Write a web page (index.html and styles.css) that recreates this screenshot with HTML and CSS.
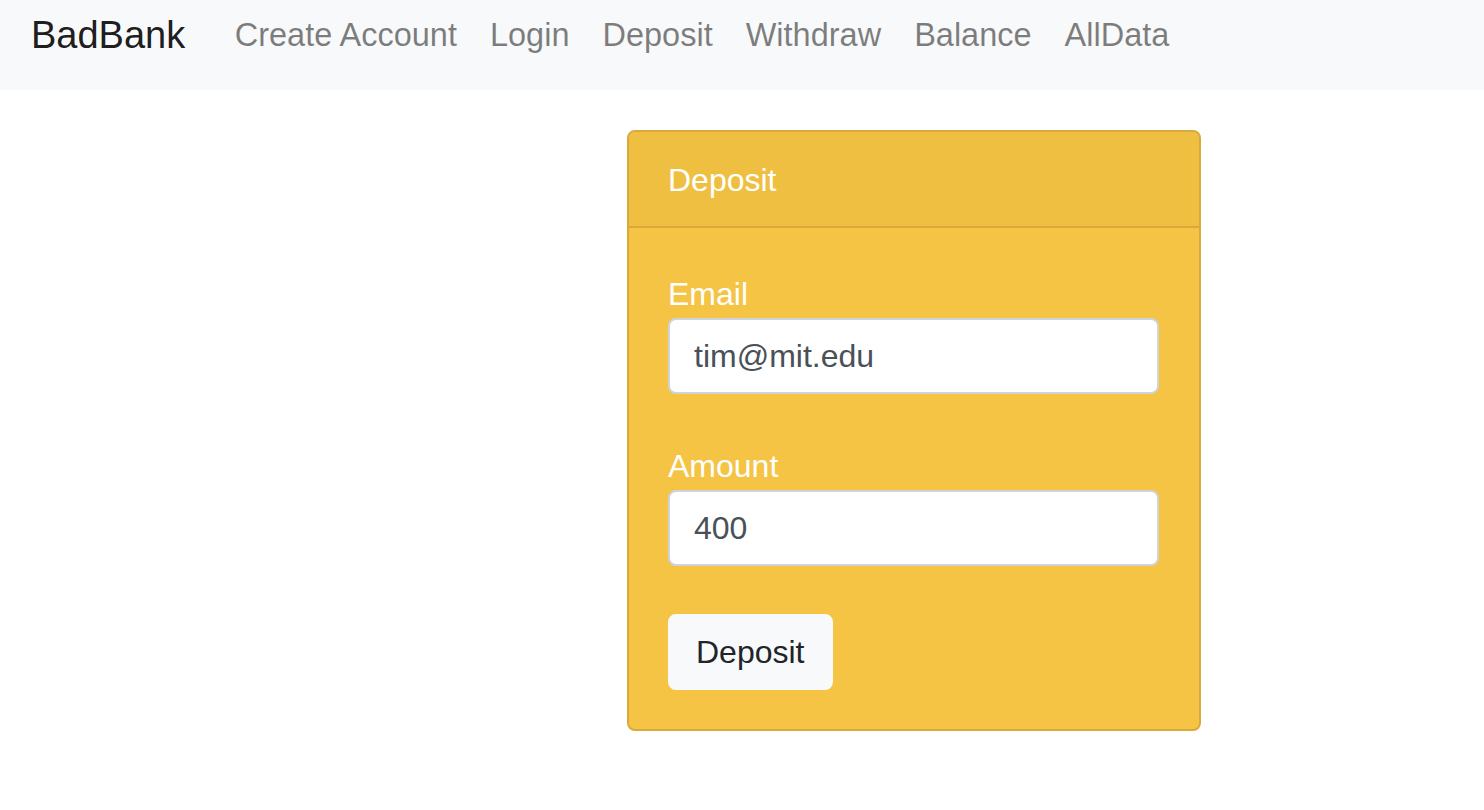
FILE: index.html
```html
<!DOCTYPE html>
<html lang="en">
<head>
<meta charset="utf-8">
<title>BadBank</title>
<link rel="stylesheet" href="styles.css">
</head>
<body>
<nav class="navbar">
  <a class="brand" href="#">BadBank</a>
  <ul class="nav">
    <li><a class="nav-link" href="#">Create Account</a></li>
    <li><a class="nav-link" href="#">Login</a></li>
    <li><a class="nav-link" href="#">Deposit</a></li>
    <li><a class="nav-link" href="#">Withdraw</a></li>
    <li><a class="nav-link" href="#">Balance</a></li>
    <li><a class="nav-link" href="#">AllData</a></li>
  </ul>
</nav>
<main class="page">
  <section class="card">
    <header class="card-header">Deposit</header>
    <div class="card-body">
      <label class="label" for="email">Email</label>
      <input class="input" id="email" type="text" value="tim@mit.edu">
      <label class="label gap" for="amount">Amount</label>
      <input class="input" id="amount" type="text" value="400">
      <button class="btn gap" type="button">Deposit</button>
    </div>
  </section>
</main>
</body>
</html>
```

FILE: styles.css
```css
* { box-sizing: border-box; }
html, body { margin: 0; padding: 0; }
body {
  font-family: "Liberation Sans", Arial, Helvetica, sans-serif;
  background: #ffffff;
  color: #212529;
}
.navbar {
  display: flex;
  align-items: flex-start;
  height: 90px;
  padding: 11px 31px 0;
  background: #f8f9fa;
}
.brand {
  font-size: 38px;
  line-height: 48px;
  color: rgba(0, 0, 0, 0.9);
  text-decoration: none;
  margin-right: 33px;
}
.nav {
  display: flex;
  list-style: none;
  margin: 0;
  padding: 0;
}
.nav-link {
  display: block;
  font-size: 32.5px;
  line-height: 48px;
  padding: 0 16.5px;
  color: rgba(0, 0, 0, 0.5);
  text-decoration: none;
}
.page {
  padding: 40px 0 0 627px;
}
.card {
  width: 574px;
  background: #f6c445;
  border: 2px solid #d9aa3b;
  border-radius: 8px;
  overflow: hidden;
}
.card-header {
  background: #efbf42;
  border-bottom: 2px solid #d9aa3b;
  color: #ffffff;
  font-size: 32px;
  line-height: 48px;
  padding: 24px 39px 22px;
}
.card-body {
  display: flex;
  flex-direction: column;
  align-items: flex-start;
  padding: 42px 40px 39px 39px;
}
.label {
  display: block;
  color: #ffffff;
  font-size: 32px;
  line-height: 48px;
}
.gap { margin-top: 48px; }
.input {
  display: block;
  width: 100%;
  height: 76px;
  padding: 12px 24px;
  border: 2px solid #ced4da;
  border-radius: 8px;
  background: #ffffff;
  color: #495057;
  font-family: inherit;
  font-size: 32px;
  line-height: 48px;
  outline: none;
}
.btn {
  height: 76px;
  padding: 12px 26px;
  border: 2px solid #f8f9fa;
  border-radius: 8px;
  background: #f8f9fa;
  color: #212529;
  font-family: inherit;
  font-size: 32px;
  line-height: 48px;
  cursor: pointer;
}
```
